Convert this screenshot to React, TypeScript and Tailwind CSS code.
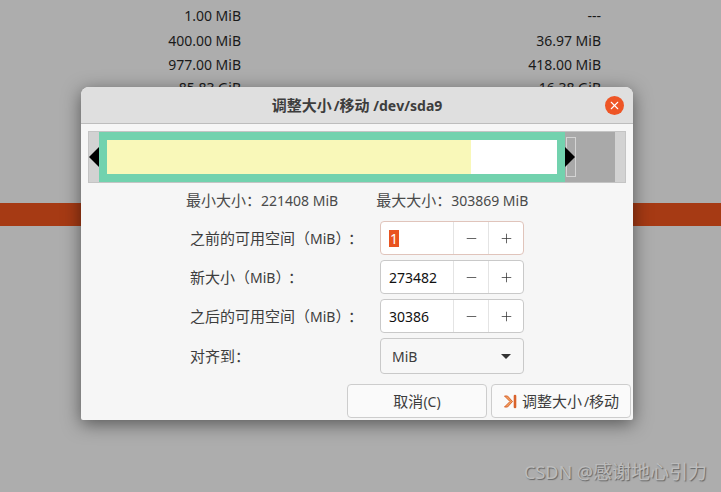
import type { ReactNode } from "react";
import { Minus, Plus, X } from "lucide-react";

const font = "font-['Noto_Sans','Noto_Sans_CJK_SC',sans-serif] [font-kerning:none]";

const rows = [
  { size: "1.00 MiB", used: "---", height: "h-[25px]" },
  { size: "400.00 MiB", used: "36.97 MiB", height: "h-[25px]" },
  { size: "977.00 MiB", used: "418.00 MiB", height: "h-[23px]" },
  { size: "85.83 GiB", used: "16.38 GiB", height: "h-[23px]" },
];

function Latin({ children }: { children: ReactNode }) {
  return <span className="text-[14px]">{children}</span>;
}

function Slash() {
  return <span className="text-[14px] ml-[2px]">/</span>;
}

function UnitLabel({ name }: { name: string }) {
  return (
    <>
      {name}
      {"\uFF08"}
      <Latin>MiB</Latin>
      {"\uFF09"}
      <span className="ml-[5px]">{"\uFF1A"}</span>
    </>
  );
}

function SpinRow({ label, value, selected }: { label: ReactNode; value: string; selected?: boolean }) {
  return (
    <div className="flex items-center h-[34px]">
      <div className="w-[200px] pl-[10px] text-[15px] text-[#3d3d3d] whitespace-nowrap">{label}</div>
      <div
        className={`flex w-[144px] h-[34px] rounded-[4px] border bg-white ${
          selected ? "border-[#e0c4bb]" : "border-[#c9c9c9]"
        }`}
      >
        <div className="flex-1 flex items-center pl-[8px] text-[14px] text-[#111]">
          {selected ? <span className="bg-[#e95420] text-white leading-[17px] px-px">{value}</span> : value}
        </div>
        <div className="w-[35px] flex items-center justify-center border-l border-[#e4e4e4] text-[#333]">
          <Minus size={15} strokeWidth={1.2} />
        </div>
        <div className="w-[35px] flex items-center justify-center border-l border-[#e4e4e4] text-[#333]">
          <Plus size={15} strokeWidth={1.2} />
        </div>
      </div>
    </div>
  );
}

export default function App() {
  return (
    <div className={`relative w-[721px] h-[492px] overflow-hidden bg-[#adadad] ${font}`}>
      <div className="pt-[3px] pl-[100px] w-[601px]">
        {rows.map((r) => (
          <div key={r.size} className={`flex items-center justify-between ${r.height} text-[14px] text-[#1a1a1a]`}>
            <div className="w-[141px] text-right">{r.size}</div>
            <div>{r.used}</div>
          </div>
        ))}
      </div>
      <div className="mt-[104px] h-[23px] bg-[#a63a14]" />

      <div className="absolute left-[81px] top-[87px] w-[552px] h-[333px] rounded-t-[8px] rounded-b-[2px] bg-[#f6f6f6] shadow-[0_4px_18px_rgba(0,0,0,0.5)] flex flex-col">
        <div className="relative h-[37px] shrink-0 rounded-t-[8px] bg-[#dfdfdf] border-b border-[#bdbdbd] flex items-center justify-center text-[15px] font-bold text-[#3d3d3d] whitespace-pre">
          <span>调整大小<Slash />移动<Latin> /dev/sda9</Latin></span>
          <div className="absolute right-[9px] top-[9px] w-[19px] h-[19px] rounded-full bg-[#ee5525] flex items-center justify-center text-white">
            <X size={13} strokeWidth={2} />
          </div>
        </div>

        <div className="relative mx-[7px] mt-[7px] h-[52px] shrink-0 border border-[#c4c4c4] bg-[#d2d2d2]">
          <div className="absolute left-[10px] top-0 bottom-0 w-[466px] bg-[#72d2ae] p-[8px]">
            <div className="h-full bg-white">
              <div className="h-full w-[364px] bg-[#f9f8b9]" />
            </div>
          </div>
          <div className="absolute left-[476px] right-[10px] top-0 bottom-0 bg-[#a9a9a9]" />
          <div className="absolute left-[477px] top-[5px] w-[10px] h-[40px] border border-[#d4d4d4]" />
          <div className="absolute left-0 top-[15px] w-0 h-0 border-y-[10px] border-y-transparent border-r-[10px] border-r-black" />
          <div className="absolute left-[476px] top-[15px] w-0 h-0 border-y-[10px] border-y-transparent border-l-[10px] border-l-black" />
        </div>

        <div className="flex h-[35px] shrink-0 items-center text-[15px] text-[#4a4a4a] pl-[105px] gap-[38px] whitespace-nowrap">
          <span>{"最小大小\uFF1A"}<Latin>221408 MiB</Latin></span>
          <span>{"最大大小\uFF1A"}<Latin>303869 MiB</Latin></span>
        </div>

        <div className="flex flex-col gap-[5px] pl-[99px] mt-[3px]">
          <SpinRow label={<UnitLabel name="之前的可用空间" />} value="1" selected />
          <SpinRow label={<UnitLabel name="新大小" />} value="273482" />
          <SpinRow label={<UnitLabel name="之后的可用空间" />} value="30386" />
          <div className="flex items-center h-[36px]">
            <div className="w-[200px] pl-[10px] text-[15px] text-[#3d3d3d]">{"对齐到\uFF1A"}</div>
            <div className="flex items-center justify-between w-[144px] h-[36px] rounded-[4px] border border-[#c9c9c9] bg-[#f7f7f7] pl-[11px] pr-[12px] text-[14px] text-[#3d3d3d]">
              MiB
              <div className="w-0 h-0 border-x-[5px] border-x-transparent border-t-[5px] border-t-[#333]" />
            </div>
          </div>
        </div>

        <div className="flex justify-end gap-[4px] pr-[2px] mt-[10px]">
          <div className="w-[140px] h-[34px] rounded-[4px] border border-[#cdcdcd] bg-[#fafafa] flex items-center justify-center text-[15px] text-[#3d3d3d]">
            <span>取消<Latin>(C)</Latin></span>
          </div>
          <div className="w-[140px] h-[34px] rounded-[4px] border border-[#cdcdcd] bg-[#fafafa] flex items-center justify-center gap-[5px] text-[15px] text-[#3d3d3d]">
            <svg width="14" height="15" viewBox="0 0 14 15" fill="none">
              <path d="M1.5 2 L7 7.5 L1.5 13 H4.5 L9.5 7.5 L4.5 2 Z" fill="#f0a060" stroke="#d9622b" strokeWidth="1" />
              <path d="M12 2 V13" stroke="#d9622b" strokeWidth="2.6" strokeLinecap="round" />
            </svg>
            <span>调整大小<Slash />移动</span>
          </div>
        </div>
      </div>

      <div className="absolute right-[14px] top-[461px] text-[19px] leading-[22px] text-[#bcbcbc] [text-shadow:1px_1px_1px_#666]">
        <span className="text-[18px]">CSDN @</span>感谢地心引力
      </div>
    </div>
  );
}
